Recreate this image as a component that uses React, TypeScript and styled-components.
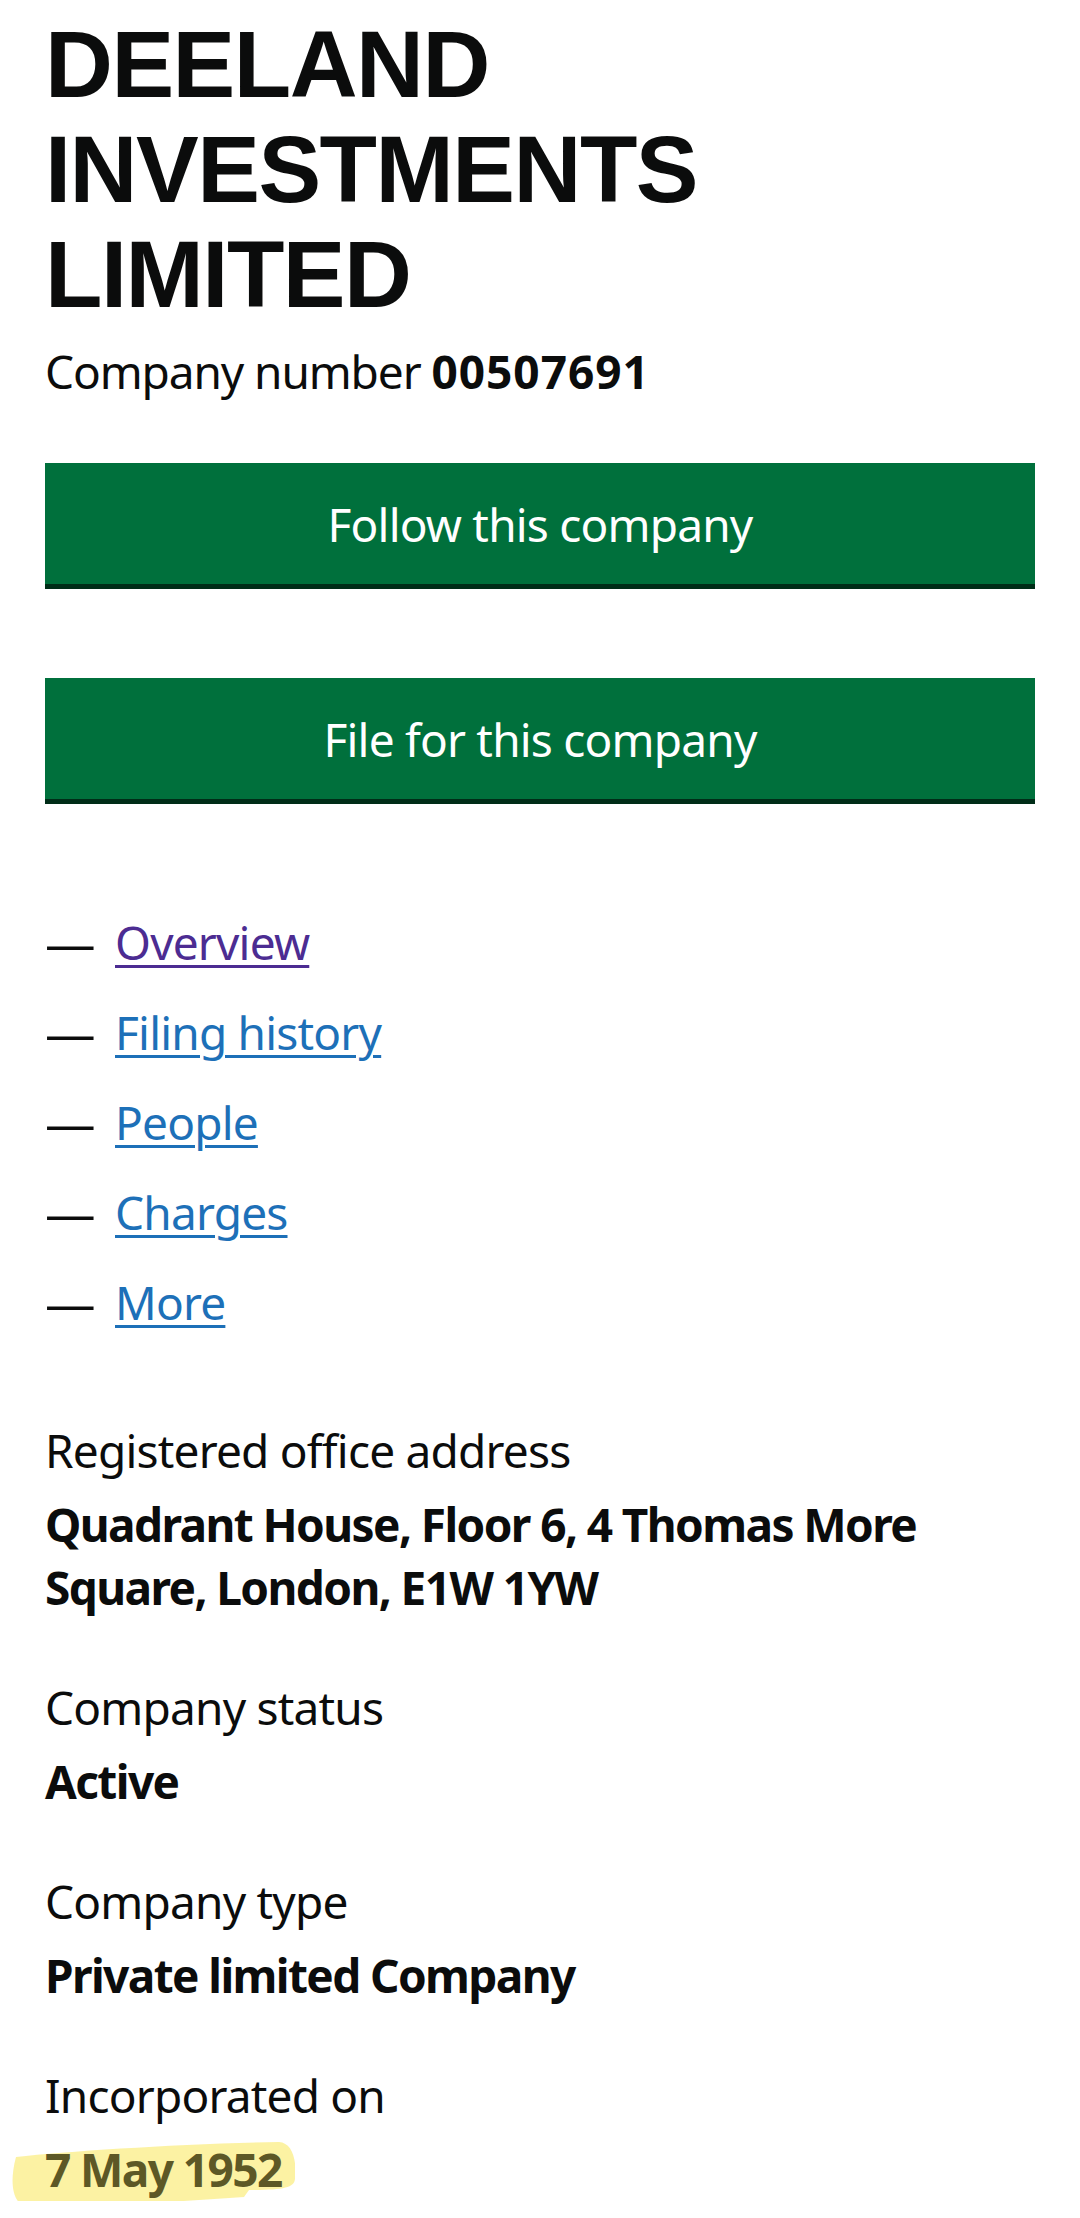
import React from 'react'
import styled, { createGlobalStyle } from 'styled-components'

const GlobalStyle = createGlobalStyle`
  body {
    margin: 0;
    background: #ffffff;
    color: #0b0c0c;
    font-family: "Noto Sans", "Open Sans", sans-serif;
    letter-spacing: -0.8px;
  }
`

const links = [
  { label: 'Overview', visited: true },
  { label: 'Filing history', visited: false },
  { label: 'People', visited: false },
  { label: 'Charges', visited: false },
  { label: 'More', visited: false },
]

const details = [
  { label: 'Registered office address', value: 'Quadrant House, Floor 6, 4 Thomas More Square, London, E1W 1YW' },
  { label: 'Company status', value: 'Active' },
  { label: 'Company type', value: 'Private limited Company' },
]

const App = () => {
  return (
    <Page>
      <GlobalStyle />
      <Title>DEELAND INVESTMENTS LIMITED</Title>
      <CompanyNumber>
        Company number <strong>00507691</strong>
      </CompanyNumber>

      <Buttons>
        <GreenButton>Follow this company</GreenButton>
        <GreenButton>File for this company</GreenButton>
      </Buttons>

      <Contents>
        {links.map((l) => (
          <ContentsItem key={l.label}>
            <Dash>—</Dash>
            <Link href="#" $visited={l.visited}>{l.label}</Link>
          </ContentsItem>
        ))}
      </Contents>

      <Details>
        {details.map((d) => (
          <Field key={d.label}>
            <Label>{d.label}</Label>
            <Value>{d.value}</Value>
          </Field>
        ))}
        <Field>
          <Label>Incorporated on</Label>
          <Value>
            <Highlighted>
              <Marker viewBox="0 0 284 67" preserveAspectRatio="none">
                <path d="M5 16 C 60 10, 170 3, 268 1 C 281 2, 286 18, 284 38 C 283 47, 272 49, 238 49 L 233 56 C 160 61, 70 67, 14 65 C 2 62, -2 42, 5 16 Z" />
              </Marker>
              <span>7 May 1952</span>
            </Highlighted>
          </Value>
        </Field>
      </Details>
    </Page>
  )
}

export default App

const Page = styled.div`
  padding: 12px 45px 0;
  box-sizing: border-box;
  width: 1080px;
`
const Title = styled.h1`
  margin: 0;
  font-family: "Liberation Sans", Arial, sans-serif;
  font-weight: 700;
  font-size: 94px;
  line-height: 105px;
  letter-spacing: -1.5px;
  color: #0b0c0c;
`
const CompanyNumber = styled.p`
  margin: 13px 0 0;
  font-size: 46px;
  line-height: 63px;
  letter-spacing: -1.1px;
  strong {
    font-weight: 700;
    letter-spacing: 1px;
  }
`
const Buttons = styled.div`
  margin-top: 60px;
  display: flex;
  flex-direction: column;
  gap: 94px;
`
const GreenButton = styled.button`
  height: 121px;
  width: 100%;
  border: 0;
  border-radius: 0;
  background: #00703c;
  box-shadow: 0 5px 0 #002d18;
  color: #ffffff;
  font-family: "Noto Sans", "Open Sans", sans-serif;
  font-size: 46px;
  letter-spacing: -0.8px;
  line-height: 1;
  display: flex;
  align-items: center;
  justify-content: center;
  padding: 0;
`
const Contents = styled.ul`
  list-style: none;
  margin: 112px 0 0;
  padding: 0;
  display: flex;
  flex-direction: column;
  gap: 27px;
`
const ContentsItem = styled.li`
  display: flex;
  align-items: baseline;
  font-size: 46px;
  line-height: 63px;
`
const Dash = styled.span`
  width: 70px;
  flex-shrink: 0;
  color: #0b0c0c;
  transform: scaleX(1.1);
  transform-origin: left center;
`
const Link = styled.a<{ $visited: boolean }>`
  color: ${(p) => (p.$visited ? '#4c2c92' : '#1d70b8')};
  text-decoration: underline;
  text-decoration-thickness: 3px;
  text-underline-offset: 5px;
`
const Details = styled.div`
  margin-top: 85px;
  display: flex;
  flex-direction: column;
  gap: 57px;
`
const Field = styled.div`
  display: flex;
  flex-direction: column;
  gap: 11px;
`
const Label = styled.div`
  font-size: 46px;
  line-height: 63px;
`
const Value = styled.div`
  font-size: 46px;
  line-height: 63px;
  font-weight: 700;
  letter-spacing: -1.6px;
`
const Highlighted = styled.span`
  position: relative;
  display: inline-block;
  color: #5d5826;
  span {
    position: relative;
  }
`
const Marker = styled.svg`
  position: absolute;
  left: -34px;
  top: 3px;
  width: 284px;
  height: 67px;
  path {
    fill: #fcf199;
    opacity: 0.9;
  }
`
